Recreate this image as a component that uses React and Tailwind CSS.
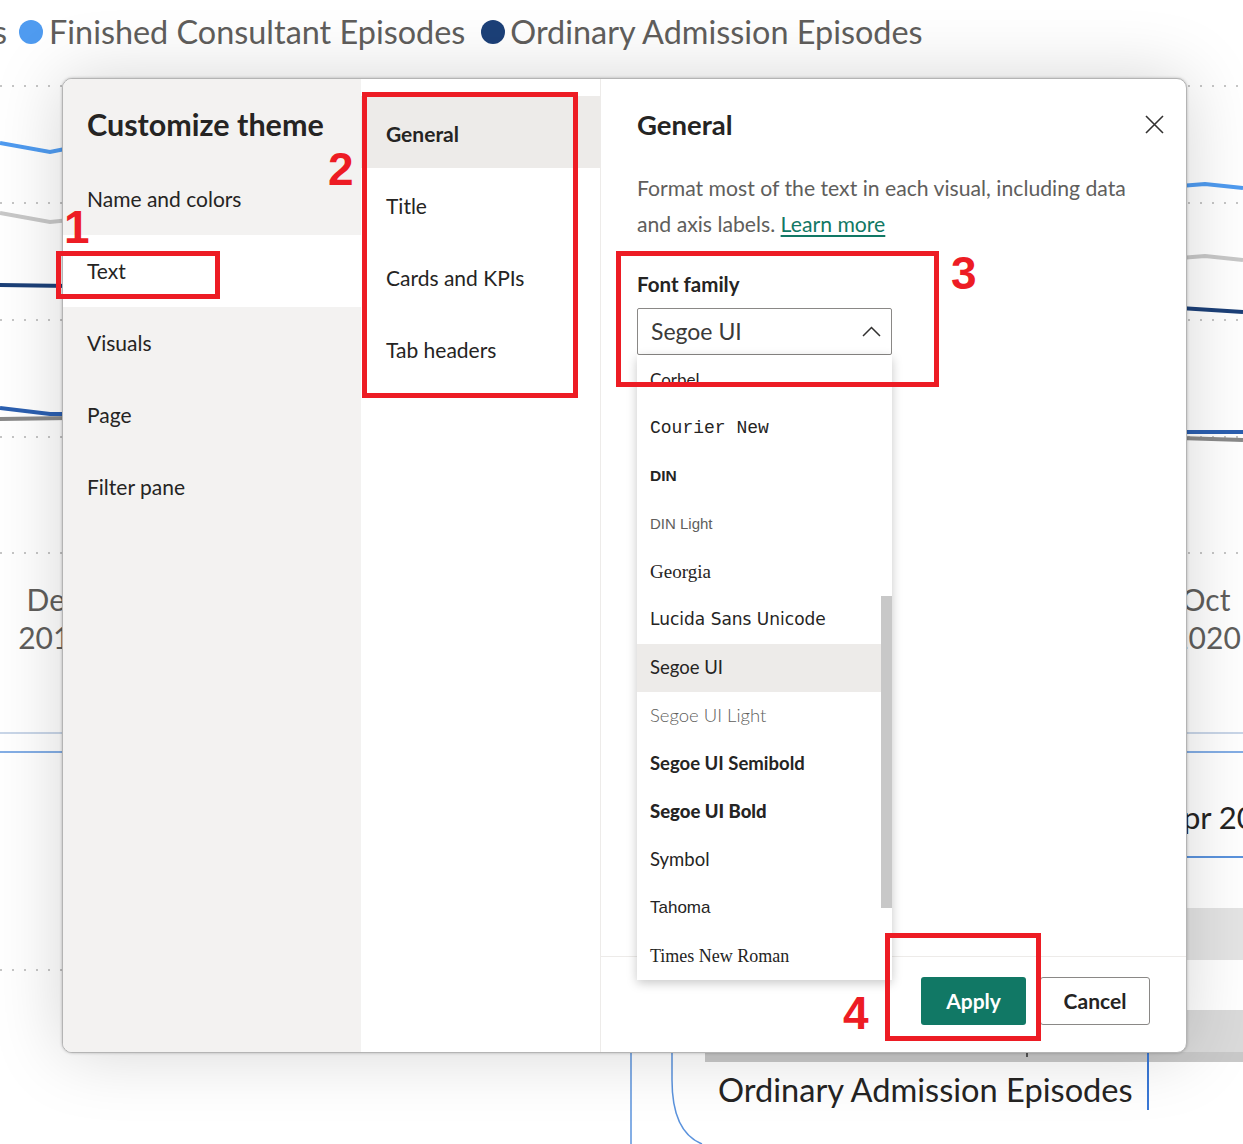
const gridRows = [86, 203, 320, 437, 553];

const themeNav = ['Name and colors', 'Text', 'Visuals', 'Page', 'Filter pane'];
const textNav = ['General', 'Title', 'Cards and KPIs', 'Tab headers'];

const fontOptions = [
  { name: 'Corbel', cls: "font-[Lato,sans-serif] text-[17px] text-[#252423]" },
  { name: 'Courier New', cls: "font-['Liberation_Mono',monospace] text-[18px] text-[#252423]" },
  { name: 'DIN', cls: "font-['Liberation_Sans',sans-serif] font-bold text-[15.5px] text-[#252423]" },
  { name: 'DIN Light', cls: "font-['Liberation_Sans',sans-serif] text-[15px] text-[#605e5c]" },
  { name: 'Georgia', cls: "font-['Liberation_Serif',serif] text-[19px] text-[#252423]" },
  { name: 'Lucida Sans Unicode', cls: "font-['DejaVu_Sans',sans-serif] text-[17px] text-[#252423]" },
  { name: 'Segoe UI', cls: "font-[Lato,sans-serif] text-[18.5px] text-[#252423]", selected: true },
  { name: 'Segoe UI Light', cls: "font-[Lato,sans-serif] font-light text-[18.5px] text-[#605e5c]" },
  { name: 'Segoe UI Semibold', cls: "font-[Lato,sans-serif] font-bold text-[18.5px] text-[#252423]" },
  { name: 'Segoe UI Bold', cls: "font-[Lato,sans-serif] font-black text-[18.5px] text-[#252423]" },
  { name: 'Symbol', cls: "font-[Lato,sans-serif] text-[18.5px] text-[#252423]" },
  { name: 'Tahoma', cls: "font-['Liberation_Sans',sans-serif] text-[17px] text-[#252423]" },
  { name: 'Times New Roman', cls: "font-['Liberation_Serif',serif] text-[18px] text-[#252423]" },
];

const marks = [
  { box: 'left-[56px] top-[251px] w-[164px] h-[48px]' },
  { box: 'left-[362px] top-[92px] w-[216px] h-[306px]' },
  { box: 'left-[616px] top-[251px] w-[323px] h-[136px]' },
  { box: 'left-[885px] top-[933px] w-[156px] h-[108px]' },
];

function ChartBackdrop() {
  return (
    <svg className="absolute inset-0" width="1243" height="1144" viewBox="0 0 1243 1144">
      {gridRows.map((y) => (
        <line key={y} x1="0" x2="1243" y1={y} y2={y} stroke="#c6c6c6" strokeWidth="2" strokeDasharray="2 10" />
      ))}
      <line x1="0" x2="62" y1="970" y2="970" stroke="#c6c6c6" strokeWidth="2" strokeDasharray="2 10" />

      {/* left series */}
      <polyline points="0,143 50,152 70,148" fill="none" stroke="#4f9bf0" strokeWidth="4" />
      <polyline points="0,213 50,222 70,220" fill="none" stroke="#c8c8c8" strokeWidth="4" />
      <polyline points="0,285 70,286" fill="none" stroke="#1c4078" strokeWidth="4" />
      <polyline points="0,408 50,414 70,414" fill="none" stroke="#2b5fb0" strokeWidth="4" />
      <polyline points="0,419 70,418" fill="none" stroke="#8a8a8a" strokeWidth="4" />

      {/* right series */}
      <polyline points="1180,186 1205,184 1243,188" fill="none" stroke="#4f9bf0" strokeWidth="4" />
      <polyline points="1180,258 1205,256 1243,260" fill="none" stroke="#c8c8c8" strokeWidth="4" />
      <polyline points="1180,308 1243,312" fill="none" stroke="#1c4078" strokeWidth="4" />
      <polyline points="1180,432 1243,432" fill="none" stroke="#2b5fb0" strokeWidth="4" />
      <polyline points="1180,438 1243,440" fill="none" stroke="#8a8a8a" strokeWidth="4" />

      <line x1="0" x2="1243" y1="733" y2="733" stroke="#c9d6e8" strokeWidth="2" />
      <line x1="0" x2="1243" y1="752" y2="752" stroke="#5b93dd" strokeWidth="1.5" />
      <line x1="1180" x2="1243" y1="857" y2="857" stroke="#5b93dd" strokeWidth="2" />

      <rect x="1180" y="908" width="63" height="52" fill="#e4e4e4" />
      <rect x="1180" y="1010" width="63" height="52" fill="#dadada" />
      <rect x="705" y="1052" width="538" height="10" fill="#c9c9c9" />

      <line x1="631" x2="631" y1="1040" y2="1144" stroke="#5b93dd" strokeWidth="1.5" />
      <path d="M672,1040 L672,1080 Q672,1132 702,1144" fill="none" stroke="#5b93dd" strokeWidth="1.5" />
      <line x1="1148" x2="1148" y1="1040" y2="1110" stroke="#3a78d6" strokeWidth="2" />
      <line x1="1027" x2="1027" y1="1040" y2="1057" stroke="#555" strokeWidth="2" />
    </svg>
  );
}

export default function App() {
  return (
    <div className="relative w-[1243px] h-[1144px] overflow-hidden bg-white font-[Lato,sans-serif]">
      <ChartBackdrop />

      {/* legend */}
      <div className="relative flex items-center h-[64px] text-[32.4px] text-[#605e5c] -ml-[7px]">
        <span>s</span>
        <span className="ml-[12px] w-[24px] h-[24px] rounded-full bg-[#4f9bf0]" />
        <span className="ml-[6px]">Finished Consultant Episodes</span>
        <span className="ml-[16px] w-[24px] h-[24px] rounded-full bg-[#1c4078]" />
        <span className="ml-[5px]">Ordinary Admission Episodes</span>
      </div>

      {/* axis labels */}
      <div className="absolute left-[18px] top-[580px] w-[70px] text-center text-[30px] leading-[38px] text-[#605e5c]">
        <div>Dec</div>
        <div>2019</div>
      </div>
      <div className="absolute left-[1170px] top-[580px] w-[72px] text-center text-[30px] leading-[38px] text-[#605e5c]">
        <div>Oct</div>
        <div>2020</div>
      </div>
      <div className="absolute left-[1162px] top-[794px] text-[31px] text-[#252423] whitespace-nowrap">Apr 2020</div>
      <div className="absolute left-[718px] top-[1066px] text-[32.6px] text-[#252423] whitespace-nowrap">Ordinary Admission Episodes</div>

      {/* dialog */}
      <div className="absolute left-[62px] top-[78px] w-[1125px] h-[975px] flex rounded-[10px] border border-[#b4b4b4] bg-white shadow-[0_0_3px_rgba(0,0,0,0.25),0_0_70px_rgba(0,0,0,0.17)] overflow-hidden text-[#252423]">
        <div className="w-[298px] bg-[#f3f2f1] flex flex-col">
          <h2 className="pl-[24px] pt-[27px] mb-[21px] text-[30.5px] leading-[36px] font-bold">Customize theme</h2>
          {themeNav.map((item) => (
            <div
              key={item}
              className={`h-[72px] flex items-center pl-[24px] text-[21px] ${item === 'Text' ? 'bg-white' : ''}`}
            >
              {item}
            </div>
          ))}
        </div>

        <div className="w-[240px] border-r border-[#edebe9] pt-[17px]">
          {textNav.map((item) => (
            <div
              key={item}
              className={`h-[72px] flex items-center pl-[25px] pt-[3px] text-[21px] ${item === 'General' ? 'bg-[#edebe9] font-bold' : ''}`}
            >
              {item}
            </div>
          ))}
        </div>

        <div className="flex-1 flex flex-col">
          <div className="flex-1 pl-[36px]">
            <div className="flex items-center justify-between pt-[28px] pr-[22px]">
              <h3 className="text-[27.5px] leading-[36px] font-bold">General</h3>
              <svg width="19" height="19" viewBox="0 0 19 19" className="mt-[-2px]">
                <path d="M1 1 L18 18 M18 1 L1 18" stroke="#323130" strokeWidth="1.6" fill="none" />
              </svg>
            </div>
            <p className="mt-[27px] text-[21.2px] leading-[36px] text-[#605e5c]">
              Format most of the text in each visual, including data
              <br />
              and axis labels.{' '}
              <a className="text-[#117865] underline underline-offset-[3px]">Learn more</a>
            </p>
            <div className="mt-[28px] text-[20.5px] leading-[28px] font-bold">Font family</div>
            <div className="relative mt-[10px] w-[255px]">
              <div className="h-[47px] flex items-center justify-between pl-[13px] pr-[10px] border border-[#8a8886] rounded-[2px] text-[23px] text-[#3b3a39]">
                <span>Segoe UI</span>
                <svg width="19" height="11" viewBox="0 0 19 11">
                  <path d="M1 10 L9.5 1.5 L18 10" stroke="#323130" strokeWidth="1.5" fill="none" />
                </svg>
              </div>
              <div className="absolute left-0 top-full z-10 w-[255px] h-[625px] flex bg-white shadow-[0_3px_10px_rgba(0,0,0,0.22)]">
                <ul className="flex-1 pt-[1px]">
                  {fontOptions.map((f) => (
                    <li
                      key={f.name}
                      className={`h-[48px] flex items-center pl-[13px] whitespace-nowrap ${f.selected ? 'bg-[#edebe9]' : ''} ${f.cls}`}
                    >
                      {f.name}
                    </li>
                  ))}
                </ul>
                <div className="w-[11px]">
                  <div className="mt-[241px] h-[312px] bg-[#c8c8c8]" />
                </div>
              </div>
            </div>
          </div>

          <div className="h-[96px] border-t border-[#edebe9] flex justify-end gap-[14px] pt-[20px] pr-[36px]">
            <button className="w-[105px] h-[48px] rounded-[3px] bg-[#117865] text-white text-[21px] font-bold">Apply</button>
            <button className="w-[110px] h-[48px] rounded-[3px] border border-[#8a8886] bg-white text-[21px] font-bold text-[#252423]">Cancel</button>
          </div>
        </div>
      </div>

      {/* red callouts */}
      {marks.map((m, i) => (
        <div key={i} className={`absolute z-20 border-[5px] border-[#ed1c24] ${m.box}`} />
      ))}
      <span className="absolute z-20 left-[64px] top-[204px] text-[46px] leading-none font-bold text-[#ed1c24] font-['Liberation_Sans',sans-serif]">1</span>
      <span className="absolute z-20 left-[328px] top-[146px] text-[46px] leading-none font-bold text-[#ed1c24] font-['Liberation_Sans',sans-serif]">2</span>
      <span className="absolute z-20 left-[951px] top-[250px] text-[46px] leading-none font-bold text-[#ed1c24] font-['Liberation_Sans',sans-serif]">3</span>
      <span className="absolute z-20 left-[843px] top-[990px] text-[46px] leading-none font-bold text-[#ed1c24] font-['Liberation_Sans',sans-serif]">4</span>
    </div>
  );
}
